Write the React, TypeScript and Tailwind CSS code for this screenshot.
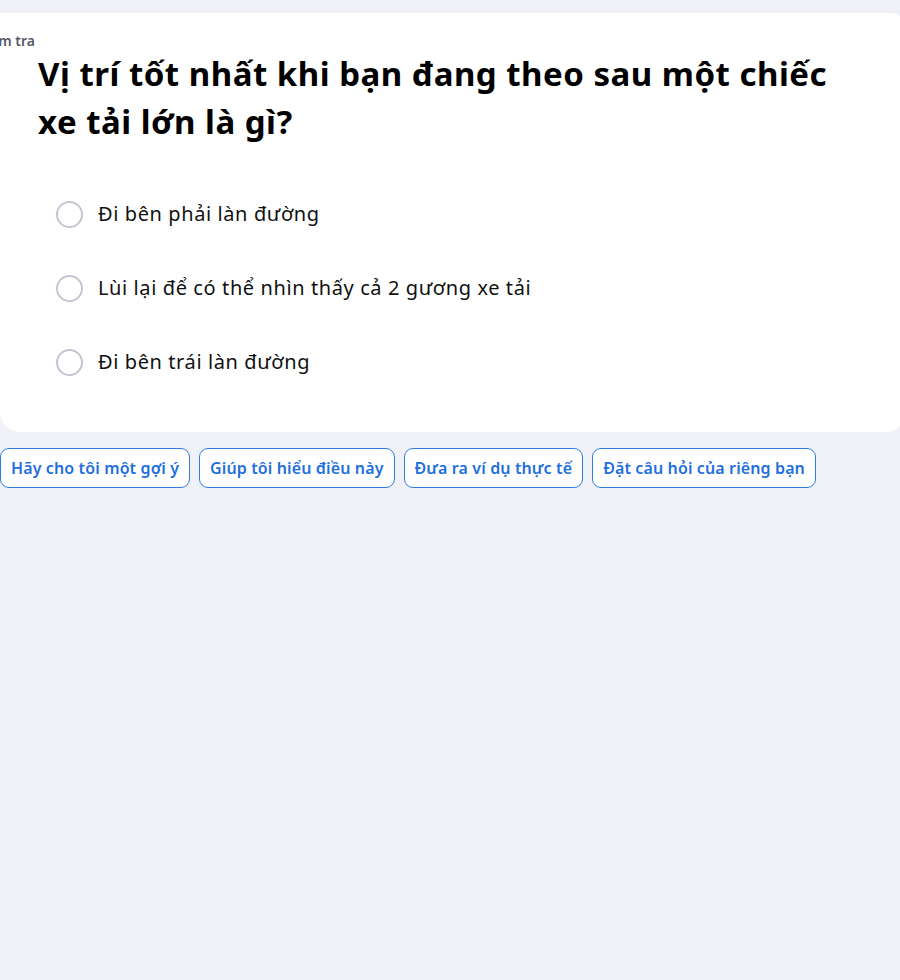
const options = [
    'Đi bên phải làn đường',
    'Lùi lại để có thể nhìn thấy cả 2 gương xe tải',
    'Đi bên trái làn đường',
];

const prompts = [
    'Hãy cho tôi một gợi ý',
    'Giúp tôi hiểu điều này',
    'Đưa ra ví dụ thực tế',
    'Đặt câu hỏi của riêng bạn',
];

export default function App() {
    return (
        <div
            className="min-h-[980px] w-[900px] overflow-hidden bg-[#f0f1f6] pt-[13px]"
            style={{ fontFamily: '"Noto Sans", Inter, sans-serif' }}
        >
            <div className="w-[906px] rounded-tr-[16px] rounded-b-[20px] bg-white pt-[19px] pb-[56px]">
                <div className="-ml-[23px] text-[14px] font-semibold leading-[18px] text-[#555a66]">
                    Kiểm tra
                </div>
                <h1 className="w-[855px] pl-[38px] text-[33px] font-bold leading-[48px] tracking-[0.5px] text-black">
                    Vị trí tốt nhất khi bạn đang theo sau một chiếc xe tải lớn là gì?
                </h1>
                <div className="mt-[54px] flex flex-col gap-[46px] pl-[56px]">
                    {options.map((o) => (
                        <label key={o} className="flex h-[28px] items-center gap-[15px]">
                            <span className="h-[27px] w-[27px] shrink-0 rounded-full border-2 border-[#c4c5d3] bg-white" />
                            <span className="text-[20px] tracking-[0.6px] text-[#111]">{o}</span>
                        </label>
                    ))}
                </div>
            </div>
            <div className="mt-[16px] flex gap-[9px]">
                {prompts.map((p) => (
                    <button
                        key={p}
                        className="h-[40px] rounded-[9px] border border-[#2f7de1] bg-white px-[10px] text-[16px] font-semibold tracking-[0.12px] text-[#1f6fdc]"
                    >
                        {p}
                    </button>
                ))}
            </div>
        </div>
    );
}
